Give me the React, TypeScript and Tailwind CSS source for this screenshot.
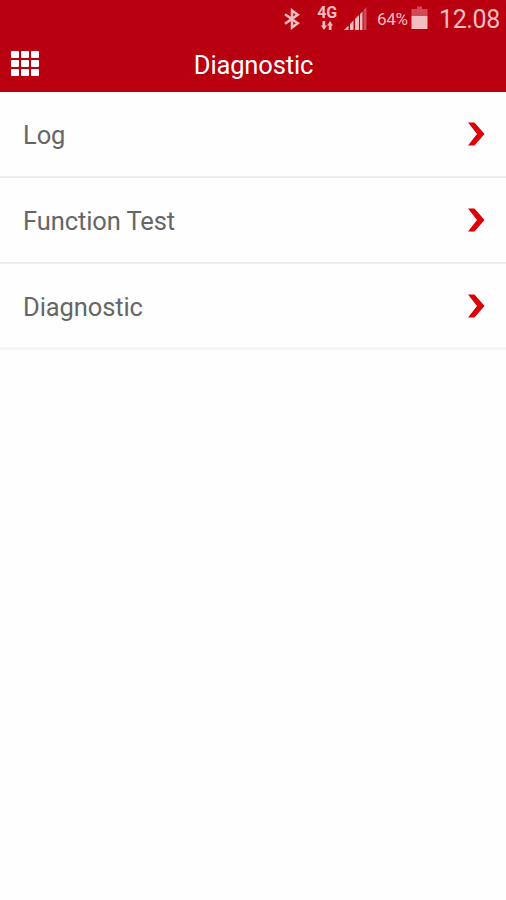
import React from 'react'

const menuItems = [
  { id: 1, label: 'Log' },
  { id: 2, label: 'Function Test' },
  { id: 3, label: 'Diagnostic' },
]

const BluetoothIcon = () => (
  <svg className="h-[22px] w-4" viewBox="0 0 16 22" fill="none">
    <path
      d="M1 6.2L13.8 15.2L8 19.5V2.5L13.8 6.8L1 15.8"
      stroke="currentColor"
      strokeWidth="2.5"
    />
  </svg>
)

const DataArrows = () => (
  <svg className="h-[9px] w-3" viewBox="0 0 12 9" fill="currentColor">
    <path d="M1.5 0H4.2V4.5H6L3 9L0 4.5H1.5Z" />
    <path d="M7.8 9H10.5V4.5H12L9 0L6 4.5H7.8Z" />
  </svg>
)

const SignalIcon = () => (
  <svg className="h-[23px] w-[23px]" viewBox="0 0 23 23" fill="currentColor">
    <path d="M0 23L4.5 18.5V23Z" />
    <path d="M6 17L9.5 13.5V23H6Z" />
    <path d="M11 12L15 8V23H11Z" />
    <path d="M16 7L18.5 4.5V23H16Z" />
    <path d="M19.5 3L22.5 0V23H19.5Z" opacity="0.4" />
  </svg>
)

const BatteryIcon = () => (
  <svg className="h-6 w-[17px]" viewBox="0 0 17 24" fill="currentColor">
    <path d="M6 0.5H11V3H16.5V10H0.5V3H6Z" opacity="0.4" />
    <path d="M0.5 10H16.5V23H0.5Z" />
  </svg>
)

const ChevronIcon = () => (
  <svg className="h-6 w-[17px]" viewBox="0 0 17 24" fill="#dc0008">
    <path d="M0 0.5H6.5L16.5 12L6.5 23.5H0L9 12Z" />
  </svg>
)

const StatusBar = () => (
  <div className="flex h-[38px] items-start justify-end pr-1 text-[#f5bcc0]">
    <div className="mt-2">
      <BluetoothIcon />
    </div>
    <div className="ml-[17px] mt-[5px] flex w-5 flex-col items-center">
      <span className="text-[16px] font-bold leading-4 tracking-[-0.3px]">
        4G
      </span>
      <DataArrows />
    </div>
    <div className="ml-[7px] mt-[7px]">
      <SignalIcon />
    </div>
    <span className="ml-[10px] mt-[9px] w-[32px] whitespace-nowrap text-[17px] leading-5 tracking-[-0.3px]">
      64%
    </span>
    <div className="ml-[2px] mt-[6px]">
      <BatteryIcon />
    </div>
    <span className="ml-[11px] mt-[5px] w-[63px] whitespace-nowrap text-[25px] leading-[30px] tracking-[-0.4px]">
      12.08
    </span>
  </div>
)

const Header = () => (
  <div className="grid h-[54px] grid-cols-[1fr_auto_1fr] items-center">
    <button className="mb-[3px] ml-[11px] grid w-[28px] grid-cols-3 gap-[2px]">
      {Array.from({ length: 9 }).map((_, i) => (
        <span key={i} className="h-[7px] rounded-[1px] bg-white" />
      ))}
    </button>
    <h1 className="pl-px text-[25.5px] leading-8 tracking-[-0.15px] text-white">
      Diagnostic
    </h1>
  </div>
)

const App = () => {
  return (
    <div className="h-[900px] w-full bg-[#fefefe] font-['Roboto',sans-serif]">
      <div className="h-[92px] bg-[#b90010]">
        <StatusBar />
        <Header />
      </div>
      <ul>
        {menuItems.map((item) => (
          <li
            key={item.id}
            className="flex h-[86px] items-center justify-between border-b-2 border-[#ebebeb] pl-[23px] pr-[21px] last:border-b-[3px] last:border-[#f5f5f5]"
          >
            <span className="pt-[2px] text-[25.5px] leading-8 tracking-[-0.1px] text-[#666666]">
              {item.label}
            </span>
            <ChevronIcon />
          </li>
        ))}
      </ul>
    </div>
  )
}

export default App
